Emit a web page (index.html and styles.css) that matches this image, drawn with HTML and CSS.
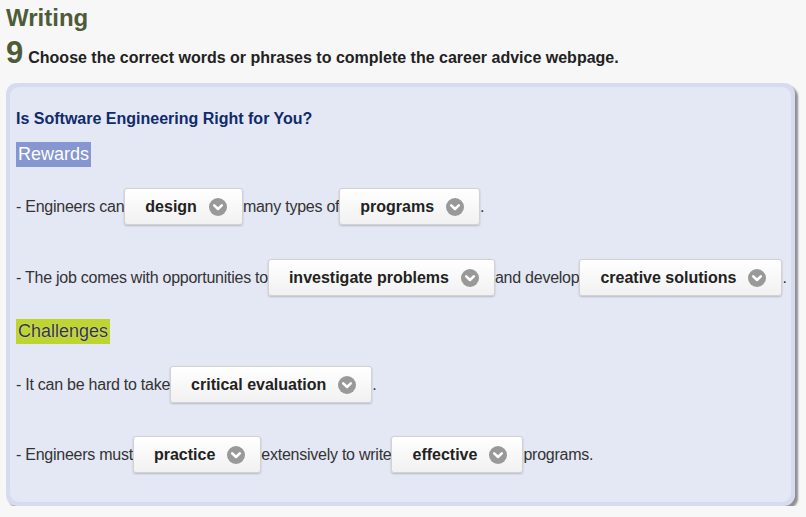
FILE: index.html
```html
<!DOCTYPE html>
<html>
<head>
<meta charset="utf-8">
<link rel="stylesheet" href="styles.css">
</head>
<body>
<h1 class="title">Writing</h1>
<div class="instr"><span class="num">9</span><span class="instr-text">Choose the correct words or phrases to complete the career advice webpage.</span></div>
<div class="panel">
  <div class="inner">
    <h2 class="qhead">Is Software Engineering Right for You?</h2>
    <div class="tag rewards">Rewards</div>
    <div class="row r1">- Engineers can<span class="dd">design<i class="chev"><svg viewBox="0 0 18 18" width="18" height="18"><circle cx="9" cy="9" r="9" fill="#999"/><path d="M5.2 7.4 L9 11 L12.8 7.4" fill="none" stroke="#fff" stroke-width="2.6" stroke-linecap="round" stroke-linejoin="round"/></svg></i></span>many types of<span class="dd">programs<i class="chev"><svg viewBox="0 0 18 18" width="18" height="18"><circle cx="9" cy="9" r="9" fill="#999"/><path d="M5.2 7.4 L9 11 L12.8 7.4" fill="none" stroke="#fff" stroke-width="2.6" stroke-linecap="round" stroke-linejoin="round"/></svg></i></span>.</div>
    <div class="row r2">- The job comes with opportunities to<span class="dd">investigate problems<i class="chev"><svg viewBox="0 0 18 18" width="18" height="18"><circle cx="9" cy="9" r="9" fill="#999"/><path d="M5.2 7.4 L9 11 L12.8 7.4" fill="none" stroke="#fff" stroke-width="2.6" stroke-linecap="round" stroke-linejoin="round"/></svg></i></span>and develop<span class="dd">creative solutions<i class="chev"><svg viewBox="0 0 18 18" width="18" height="18"><circle cx="9" cy="9" r="9" fill="#999"/><path d="M5.2 7.4 L9 11 L12.8 7.4" fill="none" stroke="#fff" stroke-width="2.6" stroke-linecap="round" stroke-linejoin="round"/></svg></i></span>.</div>
    <div class="tag challenges">Challenges</div>
    <div class="row r3">- It can be hard to take<span class="dd">critical evaluation<i class="chev"><svg viewBox="0 0 18 18" width="18" height="18"><circle cx="9" cy="9" r="9" fill="#999"/><path d="M5.2 7.4 L9 11 L12.8 7.4" fill="none" stroke="#fff" stroke-width="2.6" stroke-linecap="round" stroke-linejoin="round"/></svg></i></span>.</div>
    <div class="row r4">- Engineers must<span class="dd">practice<i class="chev"><svg viewBox="0 0 18 18" width="18" height="18"><circle cx="9" cy="9" r="9" fill="#999"/><path d="M5.2 7.4 L9 11 L12.8 7.4" fill="none" stroke="#fff" stroke-width="2.6" stroke-linecap="round" stroke-linejoin="round"/></svg></i></span>extensively to write<span class="dd">effective<i class="chev"><svg viewBox="0 0 18 18" width="18" height="18"><circle cx="9" cy="9" r="9" fill="#999"/><path d="M5.2 7.4 L9 11 L12.8 7.4" fill="none" stroke="#fff" stroke-width="2.6" stroke-linecap="round" stroke-linejoin="round"/></svg></i></span>programs.</div>
  </div>
</div>
</body>
</html>
```

FILE: styles.css
```css
html, body {
  margin: 0;
  padding: 0;
  background: #f7f7f7;
  font-family: "Liberation Sans", Arial, sans-serif;
}
.title {
  margin: 0;
  padding: 4px 0 0 6px;
  font-size: 24px;
  line-height: 28px;
  font-weight: bold;
  color: #4d5b38;
}
.instr {
  display: flex;
  align-items: baseline;
  padding: 5px 0 0 6px;
  height: 51px;
  box-sizing: border-box;
}
.num {
  font-size: 31px;
  font-weight: bold;
  color: #4d5b38;
  line-height: 32px;
  margin-right: 5px;
}
.instr-text {
  font-size: 16px;
  font-weight: bold;
  color: #222;
}
.panel {
  margin: 0 0 0 6px;
  width: 789px;
  height: 423px;
  box-sizing: border-box;
  background: #d7dbf0;
  border-radius: 11px;
  padding: 4px;
  box-shadow: 3px 3px 2px rgba(60, 60, 60, 0.55);
}
.inner {
  background: #e4e7f4;
  border-radius: 9px;
  height: 100%;
  box-sizing: border-box;
  padding: 22px 6px 0 6px;
}
.qhead {
  margin: 0;
  font-size: 16px;
  line-height: 19px;
  font-weight: bold;
  color: #0f2b6c;
}
.tag {
  display: inline-block;
  font-size: 18px;
  line-height: 25px;
  padding: 0 2px;
  height: 25px;
}
.rewards {
  margin-top: 14px;
  background: #8596d1;
  color: #fff;
}
.challenges {
  margin-top: 23px;
  background: #bdd431;
  color: #333;
  text-shadow: 0 0 1px #fff;
}
.row {
  display: flex;
  align-items: center;
  height: 37px;
  font-size: 16px;
  color: #333;
  letter-spacing: -0.25px;
  white-space: nowrap;
}
.r1 { margin-top: 21px; }
.r2 { margin-top: 34px; }
.r3 { margin-top: 22px; }
.r4 { margin-top: 33px; }
.dd {
  display: inline-flex;
  align-items: center;
  gap: 12px;
  height: 37px;
  box-sizing: border-box;
  padding: 0 15px 0 20px;
  background: linear-gradient(#ffffff, #f1f1f1);
  border: 1px solid #d2d2d2;
  border-radius: 3px;
  box-shadow: 0 1px 2px rgba(0, 0, 0, 0.2);
  font-size: 16px;
  font-weight: bold;
  color: #222;
  letter-spacing: 0;
}
.chev {
  display: inline-flex;
  width: 18px;
  height: 18px;
}
```
